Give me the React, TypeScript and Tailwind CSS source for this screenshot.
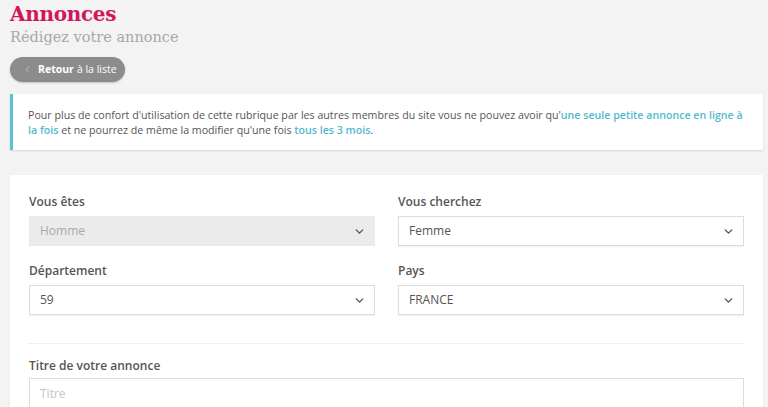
import { ChevronDown, ChevronLeft } from "lucide-react";

interface SelectBoxProps {
  label: string;
  value: string;
  disabled?: boolean;
}

const SelectBox = ({ label, value, disabled }: SelectBoxProps) => {
  return (
    <div className="flex flex-col">
      <label className="text-[12px] font-semibold text-[#555] leading-[16px] mb-[6px]">
        {label}
      </label>
      <div
        className={
          disabled
            ? "flex items-center justify-between h-[30px] pl-[10px] pr-[8px] bg-[#ebebeb] border border-[#ebebeb] text-[#a8a8a8] text-[12px]"
            : "flex items-center justify-between h-[30px] pl-[10px] pr-[8px] bg-white border border-[#dcdcdc] text-[#555] text-[12px] shadow-[0_1px_1px_rgba(0,0,0,0.05)]"
        }
      >
        <span>{value}</span>
        <ChevronDown size={13} strokeWidth={2.6} className="text-[#555]" />
      </div>
    </div>
  );
};

export default function App() {
  return (
    <div
      className="min-h-[407px] bg-[#f3f3f3] pl-[10px] pr-[5px] overflow-hidden"
      style={{ fontFamily: "'Open Sans', 'Noto Sans', sans-serif" }}
    >
      <h1
        className="text-[20px] font-bold text-[#d1165c] leading-[26px] pt-[1px] tracking-[-0.3px]"
        style={{ fontFamily: "'DejaVu Serif', serif" }}
      >
        Annonces
      </h1>
      <p
        className="text-[14.5px] text-[#a8a8a8] leading-[20px]"
        style={{ fontFamily: "'DejaVu Serif', serif", fontWeight: 300 }}
      >
        Rédigez votre annonce
      </p>
      <button className="mt-[10px] flex items-center h-[25px] w-[115px] rounded-full bg-[#8c8c8c] text-white text-[10.5px] pl-[12px] shadow-[0_1px_2px_rgba(0,0,0,0.2)]">
        <ChevronLeft size={11} strokeWidth={1.5} className="mr-[5px] text-[#d8d8d8]" />
        <span className="font-bold mr-[3px]">Retour</span>
        <span>à la liste</span>
      </button>

      <div className="mt-[12px] bg-white border-l-[3px] border-[#5bc0d6] shadow-[0_1px_2px_rgba(0,0,0,0.12)] pl-[15px] pr-[15px] pt-[14px] pb-[12px] text-[10.65px] leading-[15px] text-[#555]">
        Pour plus de confort d'utilisation de cette rubrique par les autres
        membres du site vous ne pouvez avoir qu'
        <span className="font-semibold text-[#52b9cf]">
          une seule petite annonce en ligne à la fois
        </span>{" "}
        et ne pourrez de même la modifier qu'une fois{" "}
        <span className="font-semibold text-[#52b9cf]">tous les 3 mois</span>.
      </div>

      <div className="mt-[25px] bg-white pt-[19px] px-[18px] pb-[20px] shadow-[0_1px_2px_rgba(0,0,0,0.06)]">
        <div className="grid grid-cols-2 gap-x-[23px] gap-y-[17px] px-[1px]">
          <SelectBox label="Vous êtes" value="Homme" disabled />
          <SelectBox label="Vous cherchez" value="Femme" />
          <SelectBox label="Département" value="59" />
          <SelectBox label="Pays" value="FRANCE" />
        </div>
        <div className="mt-[28px] border-t border-[#f0f0f0]" />
        <div className="mt-[14px] flex flex-col px-[1px]">
          <label className="text-[12px] font-semibold text-[#555] leading-[16px] mb-[4px]">
            Titre de votre annonce
          </label>
          <div className="flex items-center h-[32px] pl-[10px] bg-white border border-[#dcdcdc] text-[#c4c4c4] text-[12px]">
            Titre
          </div>
        </div>
      </div>
    </div>
  );
}
